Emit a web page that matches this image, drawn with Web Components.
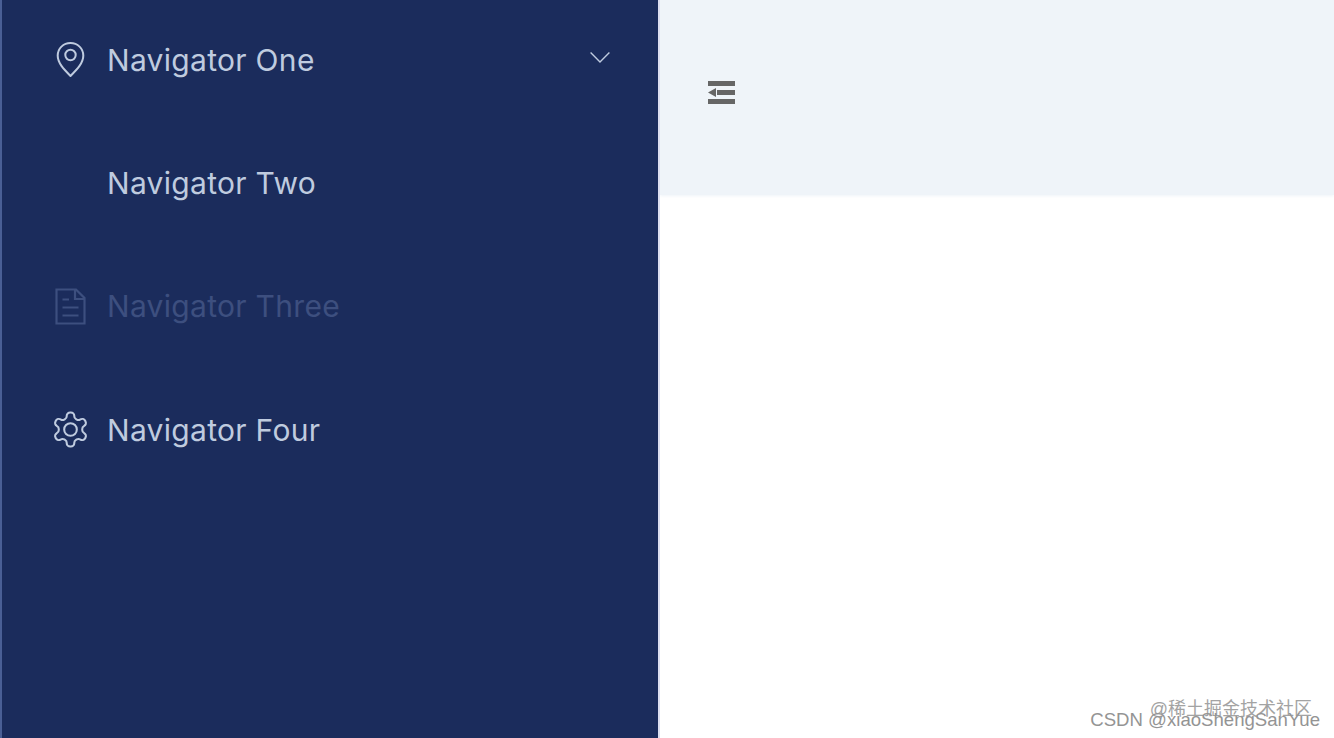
<!DOCTYPE html>
<html lang="en">
<head>
<meta charset="utf-8">
<title>Navigator</title>
<style>
html, body { margin: 0; padding: 0; height: 100%; background: #fff; overflow: hidden; }
</style>
</head>
<body>
<app-layout>
    <side-menu slot="side">
        <menu-item>
            <svg slot="icon" width="41" height="41" viewBox="0 0 41 41" fill="none" stroke="currentColor" stroke-width="2" stroke-linejoin="round">
                <path d="M20.500 37C13.500 30 7.700 24 7.700 16.600 7.700 9.400 13.400 4 20.500 4S33.300 9.400 33.300 16.600C33.300 24 27.500 30 20.500 37Z"/>
                <circle cx="20.500" cy="16" r="5.200"/>
            </svg>
            Navigator One
            <svg slot="suffix" width="20" height="11" viewBox="0 0 20 11" fill="none" stroke="#bfcbdf" stroke-width="1.4"><path d="M.6.6 10 10 19.4.6"/></svg>
        </menu-item>
        <menu-item>Navigator Two</menu-item>
        <menu-item disabled>
            <svg slot="icon" width="41" height="41" viewBox="0 0 41 41" fill="none" stroke="currentColor" stroke-width="2.200">
                <path d="M6.500 3.500H26L34.500 12V37.500H6.500Z"/>
                <path d="M25 3.500V13H34.500M12.500 13.500H19M12.500 21.500H28.500M12.500 29.500H28.500"/>
            </svg>
            Navigator Three
        </menu-item>
        <menu-item>
            <svg slot="icon" width="41" height="41" viewBox="0 0 24 24" fill="none" stroke="currentColor" stroke-width="1.200" stroke-linejoin="round">
                <path d="M12.220 2h-.44a2 2 0 0 0-2 2v.18a2 2 0 0 1-1 1.730l-.43.25a2 2 0 0 1-2 0l-.15-.08a2 2 0 0 0-2.730.73l-.22.38a2 2 0 0 0 .73 2.730l.15.1a2 2 0 0 1 1 1.720v.51a2 2 0 0 1-1 1.740l-.15.09a2 2 0 0 0-.73 2.730l.22.38a2 2 0 0 0 2.730.73l.15-.08a2 2 0 0 1 2 0l.43.25a2 2 0 0 1 1 1.730V20a2 2 0 0 0 2 2h.44a2 2 0 0 0 2-2v-.18a2 2 0 0 1 1-1.730l.43-.25a2 2 0 0 1 2 0l.15.08a2 2 0 0 0 2.730-.73l.22-.39a2 2 0 0 0-.73-2.730l-.15-.08a2 2 0 0 1-1-1.740v-.5a2 2 0 0 1 1-1.740l.15-.09a2 2 0 0 0 .73-2.730l-.22-.38a2 2 0 0 0-2.730-.73l-.15.08a2 2 0 0 1-2 0l-.43-.25a2 2 0 0 1-1-1.730V4a2 2 0 0 0-2-2z"/>
                <circle cx="12" cy="12" r="3.700"/>
            </svg>
            Navigator Four
        </menu-item>
    </side-menu>
    <top-header slot="header"></top-header>
    <water-mark slot="overlay"></water-mark>
</app-layout>

<script>
const templateLayout = document.createElement('template')

templateLayout.innerHTML = `
<style>
:host{
    display: grid;
    grid-template-columns: 660px 1fr;
    grid-template-rows: 195px 1fr;
    height: 738px;
    position: relative;
    overflow: hidden;
}
::slotted([slot=side]){
    grid-row: 1 / 3;
}
</style>
<slot name="side"></slot>
<slot name="header"></slot>
<slot name="overlay"></slot>
`

class AppLayout extends HTMLElement {
    constructor(){
        super()
        this.attachShadow({mode:'open'})
        this.shadowRoot.appendChild(templateLayout.content.cloneNode(true))
    }
}

const templateMenu = document.createElement('template')

templateMenu.innerHTML = `
<style>
:host{
    display: block;
    box-sizing: border-box;
    background-color: #1b2c5c;
    border-left: 2px solid #4a5f95;
    border-right: 2px solid #dcdff0;
    overflow: hidden;
    position: relative;
    z-index: 1;
}
.list{
    display: flex;
    flex-direction: column;
    margin-top: -2px;
}
</style>
<div class="list"><slot></slot></div>
`

class SideMenu extends HTMLElement {
    constructor(){
        super()
        this.attachShadow({mode:'open'})
        this.shadowRoot.appendChild(templateMenu.content.cloneNode(true))
    }
}

const templateItem = document.createElement('template')

templateItem.innerHTML = `
<style>
:host{
    display: flex;
    align-items: center;
    box-sizing: border-box;
    height: 123.3px;
    padding: 0 48px;
    color: #bfcbdf;
    font-family: Inter, "Noto Sans", sans-serif;
    font-size: 30px;
    font-weight: 400;
    letter-spacing: .3px;
    white-space: nowrap;
}
:host([disabled]){
    color: #3d4f7f;
}
.icon{
    display: flex;
    flex: none;
    width: 41px;
    height: 41px;
    margin-right: 16px;
}
.suffix{
    display: flex;
    margin-left: auto;
    margin-bottom: 5px;
}
</style>
<span class="icon"><slot name="icon"></slot></span>
<slot></slot>
<span class="suffix"><slot name="suffix"></slot></span>
`

class MenuItem extends HTMLElement {
    constructor(){
        super()
        this.attachShadow({mode:'open'})
        this.shadowRoot.appendChild(templateItem.content.cloneNode(true))
    }
}

const templateHeader = document.createElement('template')

templateHeader.innerHTML = `
<style>
:host{
    display: flex;
    align-items: center;
    box-sizing: border-box;
    padding: 0 0 10px 48px;
    background-color: #eff4f9;
    box-shadow: 0 1px 3px #eff4f9;
}
svg{
    display: block;
}
</style>
<svg width="27" height="23" viewBox="0 0 27 23" fill="#666">
    <path d="M0 0H27V5H0ZM9 9H27V14H9ZM0 18H27V23H0ZM0 11.500 8 7V16Z"/>
</svg>
`

class TopHeader extends HTMLElement {
    constructor(){
        super()
        this.attachShadow({mode:'open'})
        this.shadowRoot.appendChild(templateHeader.content.cloneNode(true))
    }
}

const templateMark = document.createElement('template')

templateMark.innerHTML = `
<style>
:host{
    position: absolute;
    right: 14px;
    bottom: 8px;
    display: flex;
    flex-direction: column;
    align-items: flex-end;
    font-family: "Liberation Sans", "Noto Sans CJK SC", sans-serif;
    line-height: 21px;
    white-space: nowrap;
}
.juejin{
    color: #a3a3a3;
    margin-right: 8px;
    margin-bottom: -11px;
    font-size: 18px;
}
.csdn{
    color: #949494;
    font-size: 18.6px;
}
</style>
<div class="juejin">@稀土掘金技术社区</div>
<div class="csdn">CSDN @xiaoShengSanYue</div>
`

class WaterMark extends HTMLElement {
    constructor(){
        super()
        this.attachShadow({mode:'open'})
        this.shadowRoot.appendChild(templateMark.content.cloneNode(true))
    }
}

window.customElements.define('app-layout', AppLayout)
window.customElements.define('side-menu', SideMenu)
window.customElements.define('menu-item', MenuItem)
window.customElements.define('top-header', TopHeader)
window.customElements.define('water-mark', WaterMark)
</script>
</body>
</html>
